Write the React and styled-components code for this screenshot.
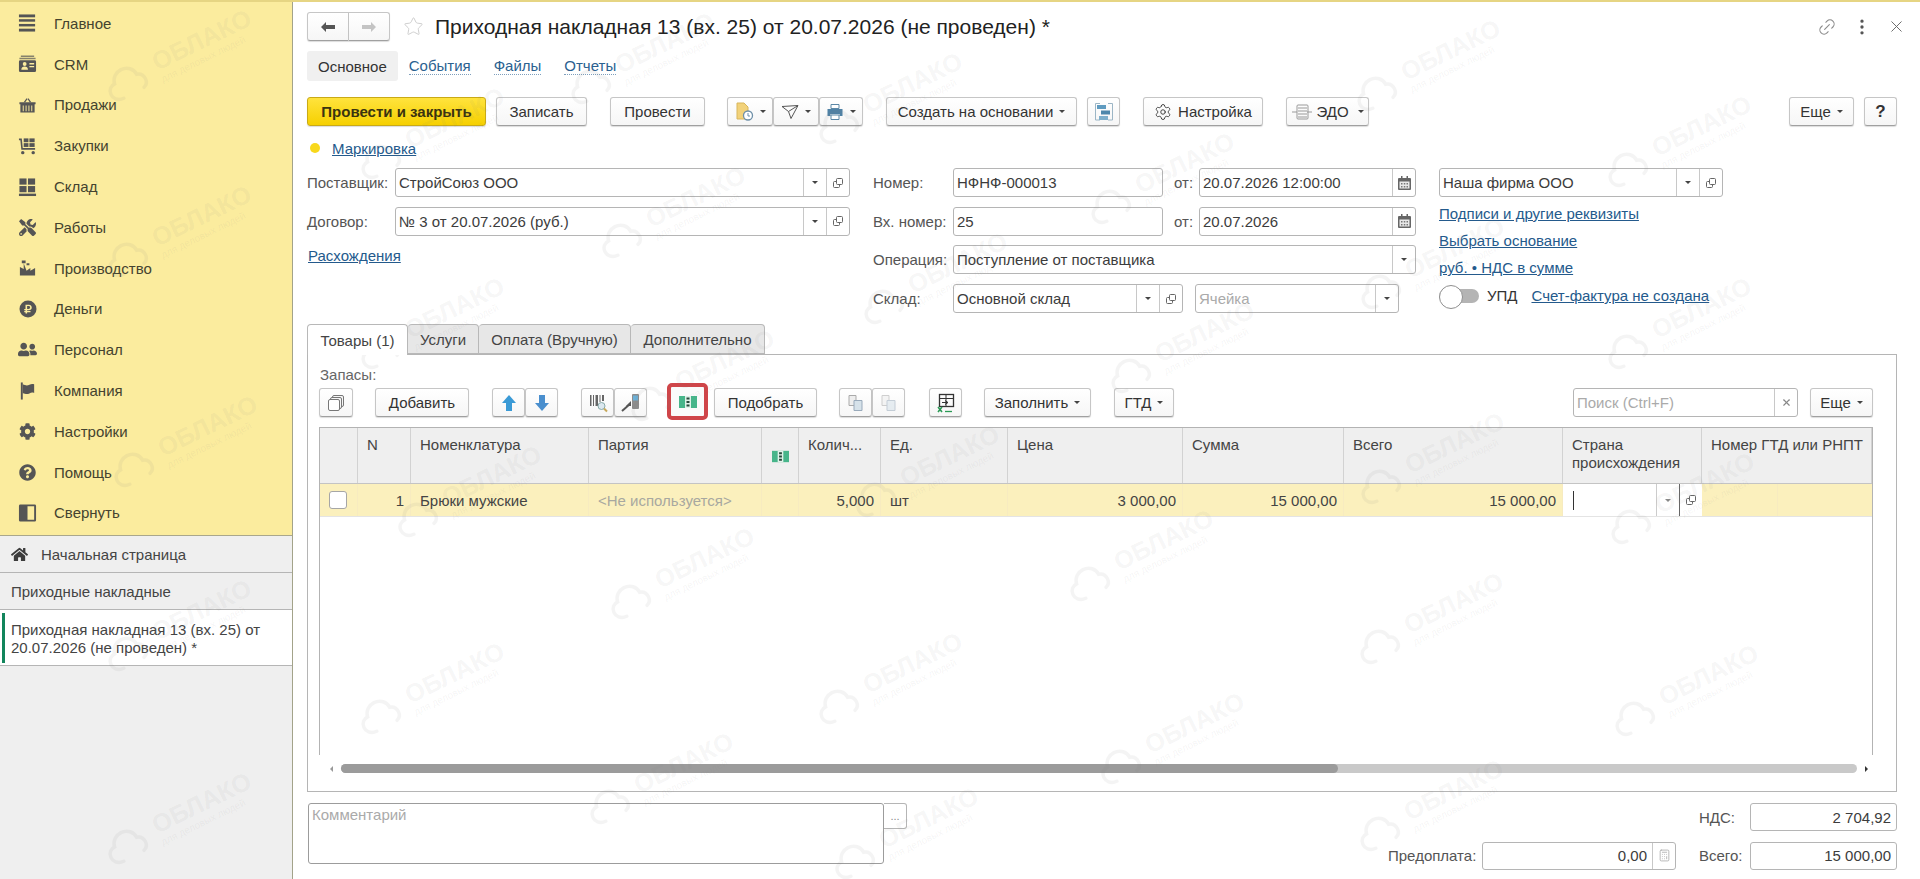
import React from "react";
import styled, { createGlobalStyle } from "styled-components";
import { FaTools, FaCog, FaQuestionCircle, FaHome, FaUserFriends, FaRubleSign } from "react-icons/fa";
import { Settings, Link2, EllipsisVertical, X, Star, Calculator } from "lucide-react";

const GlobalStyle = createGlobalStyle`
  html, body { margin: 0; padding: 0; background: #fff; overflow: hidden; }
  body { font-family: "Liberation Sans", Arial, sans-serif; font-size: 15px; color: #333; }
  * { box-sizing: border-box; }
`;

const Page = styled.div`
  position: relative;
  display: flex;
  width: 1920px;
  height: 879px;
  overflow: hidden;
  border-top: 2px solid #e6d583;
`;

/* ---------- sidebar ---------- */

const Sidebar = styled.aside`
  width: 293px;
  flex: none;
  display: flex;
  flex-direction: column;
  background: #efefef;
  border-right: 1px solid #a3a38a;
`;

const Menu = styled.nav`
  height: 534px;
  padding-top: 1px;
  background: #fbec9e;
  border-bottom: 1px solid #a9a78c;
`;

const MenuItem = styled.div`
  display: flex;
  align-items: center;
  height: 40.8px;
  padding-left: 18px;
  color: #44432f;
`;

const MenuIcon = styled.span`
  display: flex;
  justify-content: center;
  align-items: center;
  width: 19px;
  margin-right: 17px;
  color: #555;
`;

const OpenItem = styled.div`
  display: flex;
  align-items: center;
  height: 37px;
  padding: 1px 0 0 11px;
  color: #444;
  border-bottom: 1px solid #b5b5b5;
  svg { margin-right: 13px; color: #3c3c3c; }
`;

const ActiveItem = styled.div`
  position: relative;
  height: 56px;
  padding: 11px 11px 0;
  line-height: 18px;
  color: #444;
  background: #fff;
  border-bottom: 1px solid #b5b5b5;
  &::before {
    content: "";
    position: absolute;
    left: 2px;
    top: 3px;
    width: 3px;
    height: 50px;
    background: #12855c;
  }
`;

/* ---------- main ---------- */

const Main = styled.main`
  flex: 1;
  min-width: 0;
  padding: 11px 23px 0 14px;
`;

const Header = styled.header`
  display: flex;
  align-items: center;
  height: 27px;
`;

const StarWrap = styled.span`
  display: inline-flex;
  margin-left: 13px;
  color: #c8c8c8;
`;

const Title = styled.h1`
  margin: 0 0 0 11px;
  font-size: 21px;
  font-weight: 400;
  color: #222;
  white-space: nowrap;
`;

const HeaderTools = styled.div`
  display: flex;
  align-items: center;
  gap: 15px;
  margin-left: auto;
  margin-right: -9px;
  color: #8a8a8a;
`;

const Nav = styled.div`
  display: flex;
  align-items: center;
  height: 30px;
  margin-top: 11px;
`;

const NavCurrent = styled.div`
  display: flex;
  align-items: center;
  height: 30px;
  padding: 0 11px;
  margin-right: 11px;
  background: #f0f0f0;
  border-radius: 3px;
`;

const NavLink = styled.a`
  margin-right: 23px;
  color: #2b6190;
  border-bottom: 1px dotted #7f9fbc;
  line-height: 16px;
`;

const Toolbar = styled.div`
  display: flex;
  align-items: center;
  height: 29px;
  margin-top: ${(p) => p.$top || 0}px;
`;

const Btn = styled.button`
  display: inline-flex;
  flex: none;
  align-items: center;
  justify-content: center;
  gap: ${(p) => p.$gap || 0}px;
  width: ${(p) => p.$w}px;
  height: 29px;
  margin-left: ${(p) => p.$ml || 0}px;
  padding: 0;
  font: inherit;
  color: #333;
  background: linear-gradient(#fff, #f6f6f6);
  border: 1px solid #c6c6c6;
  border-bottom-color: #a0a0a0;
  border-radius: 3px;
  box-shadow: 0 1px 1px rgba(0, 0, 0, 0.14);
`;

const PrimaryBtn = styled(Btn)`
  font-weight: 700;
  color: #3a3310;
  background: linear-gradient(#ffe33d, #f6d000);
  border-color: #c9aa16;
`;

const HelpBtn = styled(Btn)`
  font-size: 17px;
  font-weight: 700;
`;

const SegmentBtn = styled(Btn)`
  border-radius: ${(p) => (p.$first ? "3px 0 0 3px" : "0 3px 3px 0")};
  border-left: ${(p) => (p.$first ? "1px solid #c6c6c6" : "none")};
`;

const PushRight = styled.div`
  margin-left: auto;
`;

const Caret = styled.i`
  display: inline-block;
  width: 0;
  height: 0;
  margin-left: ${(p) => p.$ml ?? 6}px;
  border-left: 3px solid transparent;
  border-right: 3px solid transparent;
  border-top: 3px solid ${(p) => p.$color || "#444"};
`;

const Highlight = styled.div`
  display: flex;
  flex: none;
  align-items: center;
  justify-content: center;
  width: 41px;
  height: 37px;
  margin: 0 6px 2px 20px;
  border: 4px solid #cf4549;
  border-radius: 5px;
  background: #fafafa;
`;

const Marking = styled.div`
  display: flex;
  align-items: center;
  height: 20px;
  margin-top: 12px;
  padding-left: 3px;
`;

const Dot = styled.span`
  width: 10px;
  height: 10px;
  margin-right: 12px;
  background: #f8d81c;
  border-radius: 50%;
`;

const TextLink = styled.a`
  color: #245a8c;
  text-decoration: underline;
  white-space: nowrap;
  margin-left: ${(p) => p.$ml || 0}px;
`;

/* ---------- form ---------- */

const Form = styled.section`
  display: grid;
  grid-template-columns: 543px 543px 284px;
  column-gap: 23px;
  margin-top: 10px;
`;

const FormCol = styled.div`
  display: flex;
  flex-direction: column;
  gap: 9.7px;
`;

const Row = styled.div`
  display: flex;
  align-items: center;
  height: 29px;
`;

const Label = styled.label`
  flex: none;
  width: ${(p) => p.$w}px;
  padding-left: ${(p) => p.$pl || 0}px;
  color: #555;
  white-space: nowrap;
`;

const Input = styled.div`
  display: flex;
  flex: ${(p) => (p.$w ? "none" : 1)};
  align-items: stretch;
  width: ${(p) => (p.$w ? `${p.$w}px` : "auto")};
  height: ${(p) => p.$h || 29}px;
  margin-left: ${(p) => p.$ml || 0}px;
  background: #fff;
  border: 1px solid #b5b5b5;
  border-radius: 3px;
`;

const Value = styled.div`
  flex: 1;
  align-self: center;
  min-width: 0;
  padding: 0 ${(p) => (p.$right ? 5 : 3)}px;
  color: ${(p) => (p.$hint ? "#aaa" : "#3c3c3c")};
  text-align: ${(p) => (p.$right ? "right" : "left")};
  white-space: nowrap;
`;

const Addon = styled.div`
  display: flex;
  flex: none;
  align-items: center;
  justify-content: center;
  width: 23px;
  color: #6c6c6c;
  border-left: 1px solid #c8c8c8;
`;

const Differences = styled(TextLink)`
  margin: 1px 0 0 1px;
  line-height: 20px;
`;

const Links = styled.div`
  display: flex;
  flex-direction: column;
  align-items: flex-start;
  margin-top: 3px;
  line-height: 27px;
`;

const Toggle = styled.div`
  position: relative;
  flex: none;
  width: 40px;
  height: 14px;
  margin-right: 8px;
  background: #b4b4b4;
  border-radius: 7px;
  &::before {
    content: "";
    position: absolute;
    left: 0;
    top: -4px;
    width: 22px;
    height: 22px;
    background: #fff;
    border: 1px solid #8f8f8f;
    border-radius: 50%;
  }
`;

/* ---------- tabs and table ---------- */

const Tabs = styled.div`
  display: flex;
  margin-top: 11px;
  height: 31px;
`;

const Tab = styled.div`
  display: flex;
  align-items: center;
  justify-content: center;
  width: ${(p) => p.$w}px;
  height: ${(p) => (p.$active ? 31 : 30)}px;
  position: relative;
  z-index: ${(p) => (p.$active ? 1 : 0)};
  color: #444;
  background: ${(p) => (p.$active ? "#fff" : "#e7e7e7")};
  border: 1px solid #b8b8b8;
  border-bottom: ${(p) => (p.$active ? "none" : "1px solid #b8b8b8")};
  border-left: ${(p) => (p.$first ? "1px solid #b8b8b8" : "none")};
  border-radius: 4px 4px 0 0;
`;

const Panel = styled.section`
  height: 438px;
  margin-top: -1px;
  padding: 11px 23px 0 11px;
  border: 1px solid #b5b5b5;
`;

const Caption = styled.div`
  height: 18px;
  padding-left: 1px;
  line-height: 18px;
  color: #666;
`;

const Table = styled.div`
  height: 328px;
  margin-top: 10px;
  border: 1px solid #b3b3b3;
  border-bottom: none;
`;

const COLUMNS = "38px 53px 178px 173px 37px 82px 127px 175px 161px 219px 139px 170px";

const HeadRow = styled.div`
  display: grid;
  grid-template-columns: ${COLUMNS};
  height: 56px;
  background: #efefef;
  border-bottom: 1px solid #c4c4c4;
`;

const HeadCell = styled.div`
  padding: 8px 9px 0;
  line-height: 18px;
  color: #444;
  white-space: nowrap;
  overflow: hidden;
  border-right: 1px solid #d2d2d2;
`;

const HeadIconCell = styled(HeadCell)`
  display: flex;
  justify-content: center;
  padding: 22px 0 0;
`;

const DataRow = styled.div`
  display: grid;
  grid-template-columns: ${COLUMNS};
  height: 33px;
  background: #fbf0bd;
  border-bottom: 1px solid #e4e4e4;
`;

const DataCell = styled.div`
  display: flex;
  align-items: center;
  justify-content: ${(p) => (p.$right ? "flex-end" : "flex-start")};
  padding: 0 ${(p) => (p.$right ? 6 : 9)}px 0 9px;
  color: ${(p) => (p.$hint ? "#a8a8a0" : "#444")};
  border-right: 1px solid #f7ebc0;
  white-space: nowrap;
`;

const Check = styled.span`
  width: 18px;
  height: 18px;
  background: #fff;
  border: 1px solid #a6a6a6;
  border-radius: 3px;
`;

const Editor = styled.div`
  display: flex;
  align-items: stretch;
  background: #fff;
`;

const EditorText = styled.div`
  flex: 1;
  display: flex;
  align-items: center;
  padding-left: 10px;
  &::before {
    content: "";
    width: 1px;
    height: 19px;
    background: #333;
  }
`;

const EditorAddon = styled.div`
  display: flex;
  align-items: center;
  justify-content: center;
  width: ${(p) => p.$w}px;
  border-left: 1px solid ${(p) => p.$line};
  color: #777;
`;

const SplitCell = styled.div`
  background: linear-gradient(90deg, #fbf0bd 75px, #f7ebc0 75px, #f7ebc0 76px, #fbf0bd 76px);
`;

const Scroll = styled.div`
  display: flex;
  align-items: center;
  height: 9px;
  margin-top: 9px;
  padding: 0 5px 0 11px;
`;

const ScrollTrack = styled.div`
  flex: 1;
  height: 9px;
  margin: 0 8px;
  background: #c9c9c9;
  border-radius: 5px;
`;

const ScrollThumb = styled.div`
  width: ${(p) => p.$w}px;
  height: 9px;
  background: #9b9b9b;
  border-radius: 5px;
`;

const ScrollArrow = styled.i`
  width: 0;
  height: 0;
  border-top: 3px solid transparent;
  border-bottom: 3px solid transparent;
  border-left: ${(p) => (p.$right ? "3px solid #333" : "none")};
  border-right: ${(p) => (p.$right ? "none" : "3px solid #999")};
`;

/* ---------- footer ---------- */

const Footer = styled.footer`
  display: flex;
  justify-content: space-between;
  margin-top: 11px;
`;

const CommentWrap = styled.div`
  display: flex;
  align-items: flex-start;
  margin-left: 1px;
`;

const Comment = styled.div`
  width: 576px;
  height: 61px;
  padding: 2px 3px;
  color: #aaa;
  background: #fff;
  border: 1px solid #9c9c9c;
  border-radius: 3px;
`;

const CommentBtn = styled.div`
  display: flex;
  align-items: center;
  justify-content: center;
  width: 23px;
  height: 26px;
  color: #888;
  font-size: 11px;
  border: 1px solid #b5b5b5;
  border-left: none;
  border-radius: 0 3px 3px 0;
`;

const Totals = styled.div`
  display: flex;
  flex-direction: column;
  align-items: flex-end;
  gap: 10px;
`;

const TotalField = styled.div`
  display: flex;
  align-items: center;
  height: 28px;
  margin-left: ${(p) => p.$ml || 0}px;
`;

/* ---------- watermark ---------- */

const Marks = styled.div`
  position: absolute;
  inset: 0;
  overflow: hidden;
  pointer-events: none;
`;

const Mark = styled.div`
  position: absolute;
  left: ${(p) => p.$x - 77}px;
  top: ${(p) => p.$y - 20}px;
  display: flex;
  align-items: center;
  gap: 12px;
  transform: rotate(-26deg);
  transform-origin: 77px 20px;
  color: rgba(130, 130, 130, 0.085);
`;

const MarkName = styled.div`
  font-size: 25px;
  font-weight: 700;
  line-height: 26px;
  white-space: nowrap;
`;

const MarkSub = styled.div`
  font-size: 10px;
  line-height: 11px;
  white-space: nowrap;
`;

/* ---------- icons ---------- */

const G = ({ w = 20, h = 20, children }) => (
  <svg width={w} height={h} viewBox={`0 0 ${w} ${h}`} fill="currentColor" aria-hidden="true">
    {children}
  </svg>
);

const BarsIcon = () => (
  <G>
    <rect x="1" y="1" width="17" height="3" />
    <rect x="1" y="6" width="17" height="2.6" />
    <rect x="1" y="11" width="17" height="2.6" />
    <rect x="1" y="16" width="17" height="3" />
  </G>
);
const CrmIcon = () => (
  <G>
    <path d="M3 1h14v1.500H3zM1.500 3.500h17V5h-17z" opacity=".7" />
    <path d="M2 6h16a1.500 1.500 0 0 1 1 1.500v9.500a1.500 1.500 0 0 1-1.500 1.500h-15A1.500 1.500 0 0 1 1 17V7.500A1.500 1.500 0 0 1 2 6z" />
    <circle cx="7" cy="10" r="2" fill="#fbec9e" />
    <path d="M3.500 16c0-2.400 1.500-3.400 3.500-3.400s3.500 1 3.500 3.400zM12 9h5v1.400h-5zM12 12h5v1.400h-5z" fill="#fbec9e" />
  </G>
);
const BasketIcon = () => (
  <G>
    <path d="M6 7l3-4 1 .8L7.600 7zM14 7l-3-4-1 .8L12.400 7z" />
    <path d="M1.500 7h17v2.200h-1V18h-15V9.200h-1z" />
    <path d="M5 10.500h1v6H5zM8 10.500h1v6H8zM11 10.500h1v6h-1zM14 10.500h1v6h-1z" fill="#fbec9e" />
  </G>
);
const CartIcon = () => (
  <G>
    <path d="M1 2h3l1 10h13v2H3.500L2.500 4H1z" />
    <rect x="6" y="2" width="5" height="4" />
    <rect x="12" y="2" width="5.500" height="4" />
    <rect x="6" y="7" width="5" height="4" />
    <rect x="12" y="7" width="5.500" height="4" />
    <circle cx="5" cy="17" r="1.800" />
    <circle cx="16" cy="17" r="1.800" />
  </G>
);
const StockIcon = () => (
  <G>
    <rect x="1.500" y="1" width="7.500" height="6.500" />
    <rect x="10.500" y="1" width="7.500" height="6.500" />
    <rect x="1.500" y="9" width="7.500" height="6.500" />
    <rect x="10.500" y="9" width="7.500" height="6.500" />
    <rect x="1" y="17" width="18" height="2.500" />
  </G>
);
const FactoryIcon = () => (
  <G>
    <path d="M2 18V9l4 2V5l3 8 4-3v3l5-3v8z" />
    <path d="M4 2h4v3H4zM9 5h3v2H9z" />
  </G>
);
const RubleBadge = styled.span`
  position: relative;
  display: flex;
  svg + svg {
    position: absolute;
    left: 5px;
    top: 5px;
  }
`;
const RubleIcon = () => (
  <RubleBadge>
    <G>
      <circle cx="10" cy="10" r="8.500" />
    </G>
    <FaRubleSign size={10} color="#fbec9e" />
  </RubleBadge>
);
const FlagIcon = () => (
  <G>
    <path d="M3 1h2v18H3z" />
    <path d="M5 3c3 1.500 5 1.500 7 .5s3-1 5-.5v9c-2-.5-3-.5-5 .5s-4 1-7-.5z" />
  </G>
);
const PanelIcon = () => (
  <G>
    <path d="M2.500 1h15A1.500 1.500 0 0 1 19 2.500v15a1.500 1.500 0 0 1-1.500 1.500h-15A1.500 1.500 0 0 1 1 17.500v-15A1.500 1.500 0 0 1 2.500 1zM10 3v14h7V3z" />
  </G>
);
const ArrowIcon = ({ right, color }) => (
  <svg width="16" height="12" viewBox="0 0 16 12">
    <path d={right ? "M15 6l-5-5v3H1v4h9v3z" : "M1 6l5-5v3h9v4H6v3z"} fill={color} />
  </svg>
);
const OpenIcon = () => (
  <svg width="12" height="12" viewBox="0 0 12 12" fill="none" stroke="#666" strokeWidth="1">
    <rect x="4.500" y="1.500" width="6" height="6" rx="1" />
    <path d="M4 4.500H2.500a1 1 0 0 0-1 1v4a1 1 0 0 0 1 1h4a1 1 0 0 0 1-1V8" />
  </svg>
);
const CalendarIcon = () => (
  <svg width="13" height="14" viewBox="0 0 13 14">
    <path d="M3 0h1.500v2H8.500V0H10v2h2a1 1 0 0 1 1 1v10a1 1 0 0 1-1 1H1a1 1 0 0 1-1-1V3a1 1 0 0 1 1-1h2z" fill="#666" />
    <rect x="1.500" y="5.500" width="10" height="7" fill="#e8e8e8" />
    <path d="M3 7h1.500v1.500H3zM5.800 7h1.500v1.500H5.800zM8.500 7H10v1.500H8.500zM3 10h1.500v1.500H3zM5.800 10h1.500v1.500H5.800zM8.500 10H10v1.500H8.500z" fill="#777" />
  </svg>
);
const DocIcon = () => (
  <svg width="19" height="19" viewBox="0 0 19 19">
    <path d="M2 1h7l4 4v12H2z" fill="#f2d27a" stroke="#d8b65c" />
    <circle cx="13" cy="13.500" r="4.500" fill="#fff" stroke="#6d8fa8" strokeWidth="1.300" />
    <path d="M13 11v3h2" fill="none" stroke="#6d8fa8" />
  </svg>
);
const SendIcon = () => (
  <svg width="18" height="18" viewBox="0 0 18 18" fill="none" stroke="#555" strokeWidth="1">
    <path d="M1 3.500l16-1-7 13-2.500-7zM7.500 8.500L17 2.500" />
  </svg>
);
const PrintIcon = () => (
  <svg width="18" height="18" viewBox="0 0 18 18">
    <path d="M5 1.500h8v4H5z" fill="#fff" stroke="#5b87a6" />
    <path d="M1.500 6h15v7h-3v-2h-9v2h-3z" fill="#4f82a6" />
    <path d="M5 12h8v4.500H5z" fill="#fff" stroke="#5b87a6" />
  </svg>
);
const StructureIcon = () => (
  <svg width="20" height="20" viewBox="0 0 20 20" fill="none">
    <path d="M6 1.500H1.500V18H6M14 1.500h4.500V18H14" stroke="#9cb6c6" />
    <rect x="3" y="3" width="9" height="4" fill="#5f9bc0" />
    <rect x="7" y="8.500" width="9" height="4" fill="#4e87ab" />
    <rect x="5" y="14" width="9" height="4" fill="#7fb0cc" />
  </svg>
);
const EdoIcon = () => (
  <svg width="22" height="18" viewBox="0 0 22 18" fill="none" stroke="#999">
    <rect x="6" y="2" width="11" height="14" rx="1" />
    <path d="M7 5h9M7 8h9M7 11h9M7 14h9" />
    <path d="M1 9h5M16 9h5" />
  </svg>
);
const SheetsIcon = () => (
  <svg width="18" height="18" viewBox="0 0 18 18" fill="#f6f6f6" stroke="#777">
    <rect x="5.500" y="1.500" width="11" height="11" rx="1.500" />
    <rect x="3.500" y="3.500" width="11" height="11" rx="1.500" />
    <rect x="1.500" y="5.500" width="11" height="11" rx="1.500" fill="#fff" />
  </svg>
);
const UpDown = ({ down }) => (
  <svg width="16" height="18" viewBox="0 0 16 18">
    <path d={down ? "M8 17l7-8h-4V1H5v8H1z" : "M8 1l7 8h-4v8H5V9H1z"} fill={down ? "#4a8fce" : "#3a9ad6"} />
  </svg>
);
const BarcodeIcon = () => (
  <svg width="20" height="20" viewBox="0 0 20 20">
    <path d="M2 2h1.500v11H2zM5 2h1v11H5zM7.500 2H10v11H7.500zM11.500 2h1v7h-1zM14 2h2v6h-2z" fill="#666" />
    <circle cx="13.500" cy="13" r="3.500" fill="#dce8ef" stroke="#8aa" />
    <path d="M16 15.500l3 3" stroke="#c7a95a" strokeWidth="2" />
  </svg>
);
const ScannerIcon = () => (
  <svg width="20" height="20" viewBox="0 0 20 20">
    <rect x="11" y="1" width="7" height="15" rx="1" fill="#8d8d8d" />
    <rect x="12" y="2.500" width="5" height="5" fill="#6cb1d8" />
    <path d="M1 18l8-7" stroke="#555" strokeWidth="2" />
    <path d="M10 8v5H5z" fill="#555" />
  </svg>
);
const MoneyIcon = ({ w = 18, h = 12 }) => (
  <svg width={w} height={h} viewBox="0 0 18 12">
    <rect width="18" height="12" fill="#47b58a" />
    <rect x="6" y="0" width="6" height="12" fill="#dff3e9" />
    <path d="M7.500 1.500h3v2h-3zM7.500 5h3v2h-3zM7.500 8.500h3v2h-3z" fill="#27473a" />
  </svg>
);
const CopyDocsIcon = ({ faded }) => (
  <svg width="18" height="18" viewBox="0 0 18 18" opacity={faded ? 0.55 : 1}>
    <path d="M2 1.500h7v10H2z" fill="#eee" stroke="#aaa" />
    <path d="M7 6.500h8v10H7z" fill="#d6e2ea" stroke="#9ab" />
  </svg>
);
const ExcelIcon = () => (
  <svg width="20" height="20" viewBox="0 0 20 20" fill="none">
    <rect x="3.500" y="1.500" width="14" height="12" stroke="#333" strokeWidth="1.300" />
    <path d="M10 2v11M4 5.500h13M6 9.500h6M9 7.500l3 2-3 2" stroke="#333" />
    <path d="M2 14l4 5M6 14l-4 5" stroke="#2a9a55" strokeWidth="1.600" />
    <path d="M9 18.500h7" stroke="#2a9a55" strokeWidth="1.300" />
  </svg>
);
const CloudIcon = () => (
  <svg width="42" height="34" viewBox="0 0 42 34" fill="none" stroke="currentColor" strokeWidth="3.500" strokeLinecap="round">
    <path d="M12 30C5 30 2 25 2 21c0-5 4-8 8-8 1-6 6-10 12-10 7 0 12 5 12 11 4 1 6 4 6 8 0 3-2 6-5 7" />
  </svg>
);

const Rotated = styled.span`
  display: inline-flex;
  transform: rotate(-45deg);
`;

/* ---------- data ---------- */

const MENU = [
  ["Главное", <BarsIcon />],
  ["CRM", <CrmIcon />],
  ["Продажи", <BasketIcon />],
  ["Закупки", <CartIcon />],
  ["Склад", <StockIcon />],
  ["Работы", <FaTools size={17} />],
  ["Производство", <FactoryIcon />],
  ["Деньги", <RubleIcon />],
  ["Персонал", <FaUserFriends size={19} />],
  ["Компания", <FlagIcon />],
  ["Настройки", <FaCog size={17} />],
  ["Помощь", <FaQuestionCircle size={17} />],
  ["Свернуть", <PanelIcon />],
];

const MARKS = [
  [177, 57], [177, 233], [183, 443], [177, 627], [177, 820],
  [430, 135], [430, 325], [467, 493], [430, 690],
  [640, 60], [671, 214], [700, 377], [680, 575], [659, 780],
  [888, 100], [933, 280], [925, 473], [888, 680], [904, 835],
  [1160, 180], [1180, 349], [1139, 557], [1170, 740],
  [1426, 67], [1430, 265], [1430, 460], [1429, 620], [1429, 807],
  [1677, 143], [1677, 325], [1680, 500], [1684, 692],
];

const Select = ({ children, hint, open = true }) => (
  <>
    <Value $hint={hint}>{children}</Value>
    <Addon><Caret $ml={0} /></Addon>
    {open && <Addon><OpenIcon /></Addon>}
  </>
);

const DateAddon = () => (
  <Addon><CalendarIcon /></Addon>
);

const App = () => {
  return (
    <Page>
      <GlobalStyle />
      <Sidebar>
        <Menu>
          {MENU.map(([name, icon]) => (
            <MenuItem key={name}>
              <MenuIcon>{icon}</MenuIcon>
              {name}
            </MenuItem>
          ))}
        </Menu>
        <OpenItem><FaHome size={17} />Начальная страница</OpenItem>
        <OpenItem>Приходные накладные</OpenItem>
        <ActiveItem>Приходная накладная 13 (вх. 25) от 20.07.2026 (не проведен) *</ActiveItem>
      </Sidebar>

      <Main>
        <Header>
          <SegmentBtn $first $w={42}><ArrowIcon color="#555" /></SegmentBtn>
          <SegmentBtn $w={41}><ArrowIcon right color="#c4c4c4" /></SegmentBtn>
          <StarWrap><Star size={21} strokeWidth={1} /></StarWrap>
          <Title>Приходная накладная 13 (вх. 25) от 20.07.2026 (не проведен) *</Title>
          <HeaderTools>
            <Rotated><Link2 size={20} strokeWidth={1.3} /></Rotated>
            <EllipsisVertical size={20} color="#555" />
            <X size={19} strokeWidth={1.2} color="#666" />
          </HeaderTools>
        </Header>

        <Nav>
          <NavCurrent>Основное</NavCurrent>
          <NavLink>События</NavLink>
          <NavLink>Файлы</NavLink>
          <NavLink>Отчеты</NavLink>
        </Nav>

        <Toolbar $top={16}>
          <PrimaryBtn $w={179}>Провести и закрыть</PrimaryBtn>
          <Btn $w={91} $ml={10}>Записать</Btn>
          <Btn $w={95} $ml={23}>Провести</Btn>
          <Btn $w={46} $ml={22}><DocIcon /><Caret /></Btn>
          <Btn $w={46}><SendIcon /><Caret /></Btn>
          <Btn $w={44}><PrintIcon /><Caret /></Btn>
          <Btn $w={191} $ml={23}>Создать на основании<Caret /></Btn>
          <Btn $w={33} $ml={10}><StructureIcon /></Btn>
          <Btn $w={120} $ml={23} $gap={6}><Settings size={18} strokeWidth={1.2} />Настройка</Btn>
          <Btn $w={83} $ml={23} $gap={3}><EdoIcon />ЭДО<Caret /></Btn>
          <PushRight />
          <Btn $w={65}>Еще<Caret /></Btn>
          <HelpBtn $w={33} $ml={10}>?</HelpBtn>
        </Toolbar>

        <Marking>
          <Dot />
          <TextLink>Маркировка</TextLink>
        </Marking>

        <Form>
          <FormCol>
            <Row>
              <Label $w={88}>Поставщик:</Label>
              <Input><Select>СтройСоюз ООО</Select></Input>
            </Row>
            <Row>
              <Label $w={88}>Договор:</Label>
              <Input><Select>№ 3 от 20.07.2026 (руб.)</Select></Input>
            </Row>
            <Differences>Расхождения</Differences>
          </FormCol>

          <FormCol>
            <Row>
              <Label $w={80}>Номер:</Label>
              <Input $w={210}><Value>НФНФ-000013</Value></Input>
              <Label $w={36} $pl={11}>от:</Label>
              <Input $w={217}><Value>20.07.2026 12:00:00</Value><DateAddon /></Input>
            </Row>
            <Row>
              <Label $w={80}>Вх. номер:</Label>
              <Input $w={210}><Value>25</Value></Input>
              <Label $w={36} $pl={11}>от:</Label>
              <Input $w={217}><Value>20.07.2026</Value><DateAddon /></Input>
            </Row>
            <Row>
              <Label $w={80}>Операция:</Label>
              <Input><Select open={false}>Поступление от поставщика</Select></Input>
            </Row>
            <Row>
              <Label $w={80}>Склад:</Label>
              <Input $w={230}><Select>Основной склад</Select></Input>
              <Input $w={204} $ml={12}><Select hint open={false}>Ячейка</Select></Input>
            </Row>
          </FormCol>

          <div>
            <Input><Select>Наша фирма ООО</Select></Input>
            <Links>
              <TextLink>Подписи и другие реквизиты</TextLink>
              <TextLink>Выбрать основание</TextLink>
              <TextLink>руб. • НДС в сумме</TextLink>
            </Links>
            <Row>
              <Toggle />
              УПД
              <TextLink $ml={14}>Счет-фактура не создана</TextLink>
            </Row>
          </div>
        </Form>

        <Tabs>
          <Tab $active $first $w={101}>Товары (1)</Tab>
          <Tab $w={71}>Услуги</Tab>
          <Tab $w={152}>Оплата (Вручную)</Tab>
          <Tab $w={134}>Дополнительно</Tab>
        </Tabs>

        <Panel>
          <Caption>Запасы:</Caption>
          <Toolbar $top={4}>
            <Btn $w={34}><SheetsIcon /></Btn>
            <Btn $w={94} $ml={22}>Добавить</Btn>
            <Btn $w={33} $ml={23}><UpDown /></Btn>
            <Btn $w={33}><UpDown down /></Btn>
            <Btn $w={33} $ml={23}><BarcodeIcon /></Btn>
            <Btn $w={33}><ScannerIcon /></Btn>
            <Highlight><MoneyIcon /></Highlight>
            <Btn $w={103}>Подобрать</Btn>
            <Btn $w={33} $ml={22}><CopyDocsIcon /></Btn>
            <Btn $w={33}><CopyDocsIcon faded /></Btn>
            <Btn $w={33} $ml={24}><ExcelIcon /></Btn>
            <Btn $w={107} $ml={22}>Заполнить<Caret /></Btn>
            <Btn $w={60} $ml={23}>ГТД<Caret /></Btn>
            <PushRight />
            <Input $w={225}>
              <Value $hint>Поиск (Ctrl+F)</Value>
              <Addon><X size={11} strokeWidth={2.5} color="#888" /></Addon>
            </Input>
            <Btn $w={63} $ml={12}>Еще<Caret /></Btn>
          </Toolbar>

          <Table>
            <HeadRow>
              <HeadCell />
              <HeadCell>N</HeadCell>
              <HeadCell>Номенклатура</HeadCell>
              <HeadCell>Партия</HeadCell>
              <HeadIconCell><MoneyIcon w={17} h={13} /></HeadIconCell>
              <HeadCell>Колич...</HeadCell>
              <HeadCell>Ед.</HeadCell>
              <HeadCell>Цена</HeadCell>
              <HeadCell>Сумма</HeadCell>
              <HeadCell>Всего</HeadCell>
              <HeadCell>Страна<br />происхождения</HeadCell>
              <HeadCell>Номер ГТД или РНПТ</HeadCell>
            </HeadRow>
            <DataRow>
              <DataCell><Check /></DataCell>
              <DataCell $right>1</DataCell>
              <DataCell>Брюки мужские</DataCell>
              <DataCell $hint>&lt;Не используется&gt;</DataCell>
              <DataCell />
              <DataCell $right>5,000</DataCell>
              <DataCell>шт</DataCell>
              <DataCell $right>3 000,00</DataCell>
              <DataCell $right>15 000,00</DataCell>
              <DataCell $right>15 000,00</DataCell>
              <Editor>
                <EditorText />
                <EditorAddon $w={23} $line="#ccc"><Caret $ml={0} $color="#888" /></EditorAddon>
                <EditorAddon $w={23} $line="#666"><OpenIcon /></EditorAddon>
              </Editor>
              <SplitCell />
            </DataRow>
          </Table>

          <Scroll>
            <ScrollArrow />
            <ScrollTrack><ScrollThumb $w={997} /></ScrollTrack>
            <ScrollArrow $right />
          </Scroll>
        </Panel>

        <Footer>
          <CommentWrap>
            <Comment>Комментарий</Comment>
            <CommentBtn>...</CommentBtn>
          </CommentWrap>
          <Totals>
            <TotalField>
              <Label $w={51}>НДС:</Label>
              <Input $w={147} $h={28}><Value $right>2 704,92</Value></Input>
            </TotalField>
            <Row>
              <Label $w={94}>Предоплата:</Label>
              <Input $w={194} $h={28}>
                <Value $right>0,00</Value>
                <Addon><Calculator size={13} strokeWidth={1.5} color="#aaa" /></Addon>
              </Input>
              <TotalField $ml={23}>
                <Label $w={51}>Всего:</Label>
                <Input $w={147} $h={28}><Value $right>15 000,00</Value></Input>
              </TotalField>
            </Row>
          </Totals>
        </Footer>
      </Main>

      <Marks>
        {MARKS.map(([x, y]) => (
          <Mark key={`${x}-${y}`} $x={x} $y={y}>
            <CloudIcon />
            <div>
              <MarkName>ОБЛАКО</MarkName>
              <MarkSub>для деловых людей</MarkSub>
            </div>
          </Mark>
        ))}
      </Marks>
    </Page>
  );
};

export default App;
